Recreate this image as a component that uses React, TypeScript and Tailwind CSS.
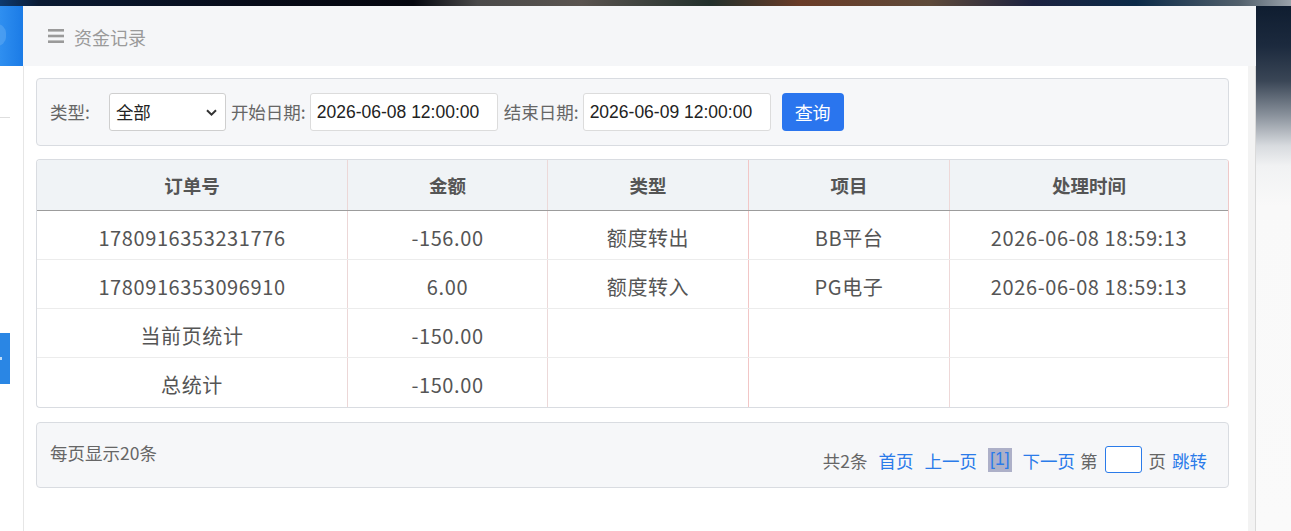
import React from "react";

const cjk = '"Noto Sans CJK SC", "Microsoft YaHei", sans-serif';
const arial = '"Liberation Sans", Arial, "Noto Sans CJK SC", sans-serif';

const cols = [
  { w: "w-[311px]", b: "border-r border-[#ecd7d7]" },
  { w: "w-[200px]", b: "border-r border-[#ecd9d9]" },
  { w: "w-[201px]", b: "border-r border-[#f2c6c6]" },
  { w: "w-[201px]", b: "border-r border-[#eed8d8]" },
  { w: "flex-1", b: "" },
];

const header = ["订单号", "金额", "类型", "项目", "处理时间"];
const rows = [
  ["1780916353231776", "-156.00", "额度转出", "BB平台", "2026-06-08 18:59:13"],
  ["1780916353096910", "6.00", "额度转入", "PG电子", "2026-06-08 18:59:13"],
  ["当前页统计", "-150.00", "", "", ""],
  ["总统计", "-150.00", "", "", ""],
];

function Row({ cells, head, last }: { cells: string[]; head?: boolean; last?: boolean }) {
  return (
    <div
      className={
        "flex " +
        (head
          ? "h-[51px] bg-[#f0f3f6] border-b border-[#9c9c9c] font-bold text-[18.5px]"
          : "h-[49px] text-[20px] tracking-[0.6px] " + (last ? "" : "border-b border-[#ececec]"))
      }
    >
      {cells.map((c, i) => (
        <div
          key={i}
          className={
            cols[i].w +
            " " +
            cols[i].b +
            " flex items-center justify-center text-[#555] leading-none " +
            (head ? "" : "pt-[5px]")
          }
        >
          {c}
        </div>
      ))}
    </div>
  );
}

export default function App() {
  return (
    <div
      className="w-[1291px] h-[531px] overflow-hidden flex flex-col bg-[#f8f8f8]"
      style={{ fontFamily: cjk }}
    >
      <div className="h-[6px] shrink-0 bg-[linear-gradient(90deg,#0e3a6e_0%,#0a1a33_3%,#070b18_20%,#05070f_32%,#4a4a4a_37%,#5a5450_45%,#22302c_55%,#6a3c28_62%,#5e4a3a_72%,#1c2240_80%,#0b2a48_88%,#52606c_96%,#9aa2aa_100%)]" />
      <div className="flex flex-1 min-h-0">
        {/* sidebar */}
        <div className="w-[23px] shrink-0 bg-white flex flex-col">
          <div className="h-[60px] bg-[linear-gradient(90deg,#2f8ff0,#1b7be6)] relative overflow-hidden">
            <div className="absolute -left-[12px] top-[18px] w-[18px] h-[22px] rounded-full bg-[#5aa6f2] opacity-60" />
          </div>
          <div className="mt-[51px] w-[10px] h-px bg-[#dedede]" />
          <div className="mt-[215px] w-[10px] h-[51px] bg-[#2a86e4] flex items-center">
            <div className="w-[2px] h-[3px] bg-white/70" />
          </div>
        </div>

        {/* main */}
        <div className="w-[1233px] shrink-0 flex flex-col">
          <div className="h-[60px] shrink-0 bg-[#f5f6f8] flex items-center pl-[25px]">
            <svg width="16" height="14" viewBox="0 0 16 14" className="mt-[-1px]">
              <rect x="0" y="0" width="16" height="2.6" fill="#9a9a9a" />
              <rect x="0" y="5.7" width="16" height="2.6" fill="#9a9a9a" />
              <rect x="0" y="11.4" width="16" height="2.6" fill="#9a9a9a" />
            </svg>
            <span className="ml-[10px] mt-[2px] text-[18px] text-[#9a9a9a] leading-none">资金记录</span>
          </div>
          <div className="flex flex-1 min-h-0">
            <div className="w-[1225px] bg-white border-l border-[#e6e6e6] pl-3 pr-[19px] pt-3 flex flex-col">
              {/* filter */}
              <div className="h-[68px] border border-[#d9dce1] rounded-[4px] bg-[#f6f7f9] flex items-center pl-[13px] text-[17.5px] text-[#666]">
                <span className="leading-none">类型:</span>
                <div className="relative ml-[19px] w-[117px] h-[38px]">
                  <select
                    className="appearance-none w-full h-full bg-white border border-[#cfcfcf] rounded-[3px] pl-[6px] text-[17.5px] text-[#222] outline-none"
                    style={{ fontFamily: cjk }}
                    defaultValue="全部"
                  >
                    <option>全部</option>
                  </select>
                  <svg
                    width="11"
                    height="7"
                    viewBox="0 0 11 7"
                    className="absolute right-[9px] top-[16px] pointer-events-none"
                  >
                    <path d="M1 1.2 L5.5 5.6 L10 1.2" stroke="#333" strokeWidth="2" fill="none" />
                  </svg>
                </div>
                <span className="ml-[5px] leading-none">开始日期:</span>
                <input
                  readOnly
                  value="2026-06-08 12:00:00"
                  className="ml-[4px] w-[188px] h-[38px] bg-white border border-[#dcdcdc] rounded-[3px] pl-[6px] text-[17.5px] text-[#222] outline-none"
                  style={{ fontFamily: arial }}
                />
                <span className="ml-[6px] leading-none">结束日期:</span>
                <input
                  readOnly
                  value="2026-06-09 12:00:00"
                  className="ml-[4px] w-[188px] h-[38px] bg-white border border-[#dcdcdc] rounded-[3px] pl-[6px] text-[17.5px] text-[#222] outline-none"
                  style={{ fontFamily: arial }}
                />
                <button className="ml-[11px] w-[62px] h-[38px] bg-[#2a75ee] rounded-[4px] text-white text-[18px] leading-none">
                  查询
                </button>
              </div>

              {/* table */}
              <div className="mt-[13px] border border-[#d9dce1] border-r-[#efc8c8] rounded-[4px] overflow-hidden">
                <Row cells={header} head />
                {rows.map((r, i) => (
                  <Row key={i} cells={r} last={i === rows.length - 1} />
                ))}
              </div>

              {/* pagination */}
              <div className="mt-[14px] h-[66px] border border-[#d9dce1] rounded-[4px] bg-[#f6f7f9] flex justify-between pl-[13px] pr-[21px] text-[17.5px] text-[#666]">
                <span className="pt-[21px] leading-none">每页显示20条</span>
                <div className="pt-[29px] flex items-start leading-none">
                  <span>共2条</span>
                  <span className="ml-[11px] text-[#2b7be9]">首页</span>
                  <span className="ml-[11px] text-[#2b7be9]">上一页</span>
                  <span
                    className="ml-[11px] -mt-[4px] h-[24px] px-[2px] flex items-center bg-[#adb0c8] text-[#2b7be9]"
                    style={{ fontFamily: arial }}
                  >
                    [1]
                  </span>
                  <span className="ml-[11px] text-[#2b7be9]">下一页</span>
                  <span className="ml-[5px]">第</span>
                  <div className="ml-[7px] -mt-[6px] w-[37px] h-[27px] bg-white border border-[#2b7be9] rounded-[3px]" />
                  <span className="ml-[7px]">页</span>
                  <span className="ml-[6px] text-[#2b7be9]">跳转</span>
                </div>
              </div>
            </div>
            <div className="w-[8px] bg-[#f3f3f3] border-r border-[#dadada]" />
          </div>
        </div>

        {/* right background */}
        <div className="flex-1 bg-[linear-gradient(180deg,#0f1d30_0px,#1c2a3e_40px,#3a4656_75px,#8b939d_110px,#d8dbdf_140px,#f1f2f3_160px,#f9f9f9_200px,#fafafa_100%)]" />
      </div>
    </div>
  );
}
